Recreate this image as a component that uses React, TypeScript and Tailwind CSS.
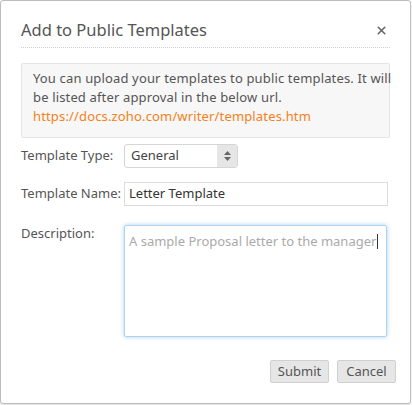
import { X } from "lucide-react";

export default function App() {
  return (
    <div
      className="h-[405px] w-[412px] bg-white"
      style={{ fontFamily: '"Noto Sans", "DejaVu Sans", sans-serif' }}
    >
      <div className="flex h-[404px] w-[411px] flex-col rounded-[3px] border border-[#bdbdbd] bg-white px-5 shadow-[0_1px_2px_rgba(0,0,0,0.15)]">
        {/* Header */}
        <div className="flex h-[47px] items-end justify-between border-b border-dotted border-[#cfcfcf] pb-[5px]">
          <h2 className="text-[16.5px] leading-[24px] text-[#555]">Add to Public Templates</h2>
          <X className="mb-[5px] mr-[2px] h-[13px] w-[13px] text-[#666]" strokeWidth={3} />
        </div>

        {/* Info box */}
        <div className="mt-[15px] whitespace-nowrap rounded-[2px] border border-[#e6e6e6] bg-[#f7f7f7] px-[11px] pb-[11px] pt-[5px] text-[13px] leading-[19px] tracking-[0.15px] text-[#555]">
          <p>
            You can upload your templates to public templates. It will
            <br />
            be listed after approval in the below url.
          </p>
          <a className="text-[#f58020]" href="#">
            https://docs.zoho.com/writer/templates.htm
          </a>
        </div>

        {/* Form */}
        <div className="mt-[6px] flex flex-col text-[13px] text-[#555]">
          <div className="flex h-[24px] items-center">
            <label className="w-[103px]">Template Type:</label>
            <div className="flex h-[24px] w-[114px] items-center overflow-hidden rounded-[3px] border border-[#d6d6d6] bg-white">
              <span className="flex-1 pl-[6px] text-[#444]">General</span>
              <div className="flex h-full w-[20px] flex-col items-center justify-center gap-[2px] bg-[#e6e6e6]">
                <svg width="7" height="4" viewBox="0 0 7 4"><path d="M0 4 L3.5 0 L7 4Z" fill="#666" /></svg>
                <svg width="7" height="4" viewBox="0 0 7 4"><path d="M0 0 L3.5 4 L7 0Z" fill="#666" /></svg>
              </div>
            </div>
          </div>

          <div className="mt-[14px] flex h-[24px] items-center">
            <label className="w-[103px]">Template Name:</label>
            <div className="flex h-[24px] w-[264px] items-center border border-[#dcdcdc] bg-white pl-[4px] text-[#333]">
              Letter Template
            </div>
          </div>

          <div className="mt-[19px] flex">
            <label className="w-[103px] leading-[16px]">Description:</label>
            <div className="h-[112px] w-[263px] whitespace-nowrap rounded-[2px] border border-[#aed3ef] bg-white pl-[4px] pt-[5px] leading-[17px] text-[#aaa] shadow-[0_0_4px_rgba(100,170,230,0.55)]">
              A sample Proposal letter to the manager
              <span className="ml-[1px] inline-block h-[15px] w-[1px] translate-y-[3px] bg-[#333]" />
            </div>
          </div>
        </div>

        {/* Footer */}
        <div className="mt-[23px] flex justify-end gap-[8px]">
          <button className="h-[23px] w-[59px] rounded-[2px] border border-[#d0d0d0] bg-[#e6e6e6] text-[13px] text-[#555]">
            Submit
          </button>
          <button className="-mr-[6px] h-[23px] w-[59px] rounded-[2px] border border-[#d0d0d0] bg-[#e6e6e6] text-[13px] text-[#555]">
            Cancel
          </button>
        </div>
      </div>
    </div>
  );
}
